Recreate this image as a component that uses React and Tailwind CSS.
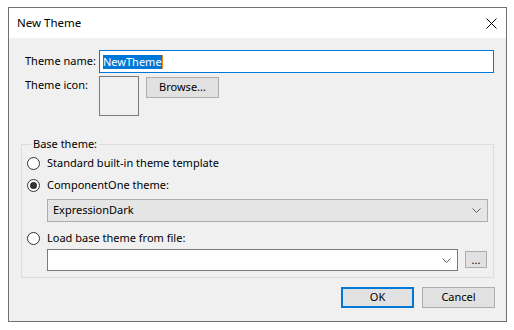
import React from "react";

const font = { fontFamily: '"Noto Sans", "Open Sans", sans-serif' };

function Radio({ checked }) {
  return (
    <span className="w-[13px] h-[13px] rounded-full border border-[#333333] bg-white flex items-center justify-center shrink-0">
      {checked && <span className="w-[7px] h-[7px] rounded-full bg-[#333333]" />}
    </span>
  );
}

function Chevron() {
  return (
    <svg width="9" height="5" viewBox="0 0 9 5" className="shrink-0">
      <path d="M0.5 0.5 L4.5 4.5 L8.5 0.5" fill="none" stroke="#606060" strokeWidth="1" />
    </svg>
  );
}

export default function App() {
  return (
    <div className="w-[514px] h-[330px] bg-white pt-[7px] pl-[8px] text-[11px] text-black" style={font}>
      <div className="w-[499px] h-[315px] border border-[#707070] bg-[#f0f0f0] flex flex-col">
        <div className="h-[30px] bg-white flex items-center justify-between pl-[8px] pr-[9px] text-[11.5px]">
          <span>New Theme</span>
          <svg width="11" height="11" viewBox="0 0 11 11">
            <path d="M0.5 0.5 L10.5 10.5 M10.5 0.5 L0.5 10.5" stroke="#000" strokeWidth="1" />
          </svg>
        </div>
        <div className="flex flex-col">
          <div className="mt-[12px] flex items-center">
            <span className="pl-[16px] w-[90px]">Theme name:</span>
            <div className="w-[395px] h-[23px] border border-[#0078d7] bg-white flex items-center pl-[3px]">
              <span className="bg-[#0078d7] text-white leading-[14px] h-[14px]">NewTheme</span>
              <span className="w-[1px] h-[14px] bg-[#f28a1e]" />
            </div>
          </div>
          <div className="mt-[3px] flex">
            <span className="pl-[16px] w-[90px] leading-[16px] mt-[1px]">Theme icon:</span>
            <div className="w-[40px] h-[40px] border border-[#7a7a7a]" />
            <div className="ml-[7px] mt-[1px] w-[73px] h-[21px] border border-[#adadad] bg-[#e1e1e1] flex items-center justify-center">
              Browse...
            </div>
          </div>
          <div className="mt-[28px] ml-[12px] w-[473px] h-[134px] border border-[#dcdcdc] relative pl-[5px]">
            <span className="absolute left-[9px] top-[-9px] px-[2px] bg-[#f0f0f0] leading-[16px]">Base theme:</span>
            <div className="mt-[10px] flex items-center h-[16px] gap-[7px]">
              <Radio />
              <span>Standard built-in theme template</span>
            </div>
            <div className="mt-[6px] flex items-center h-[16px] gap-[7px]">
              <Radio checked />
              <span>ComponentOne theme:</span>
            </div>
            <div className="mt-[6px] ml-[20px] w-[441px] h-[23px] border border-[#adadad] bg-[#e5e5e5] flex items-center justify-between pl-[5px] pr-[6px]">
              <span>ExpressionDark</span>
              <Chevron />
            </div>
            <div className="mt-[8px] flex items-center h-[16px] gap-[7px]">
              <Radio />
              <span>Load base theme from file:</span>
            </div>
            <div className="mt-[3px] ml-[20px] flex items-start">
              <div className="w-[411px] h-[22px] border border-[#7a7a7a] bg-white flex items-center justify-end pr-[6px]">
                <Chevron />
              </div>
              <div className="ml-[7px] mt-[2px] w-[22px] h-[17px] border border-[#adadad] bg-[#e1e1e1] flex items-end justify-center leading-[12px] pb-[1px]">
                ...
              </div>
            </div>
          </div>
          <div className="mt-[9px] flex justify-end pr-[11px] gap-[8px]">
            <div className="w-[73px] h-[21px] border-2 border-[#0078d7] bg-[#e1e1e1] flex items-center justify-center">OK</div>
            <div className="w-[73px] h-[21px] border border-[#adadad] bg-[#e1e1e1] flex items-center justify-center">Cancel</div>
          </div>
        </div>
      </div>
    </div>
  );
}
